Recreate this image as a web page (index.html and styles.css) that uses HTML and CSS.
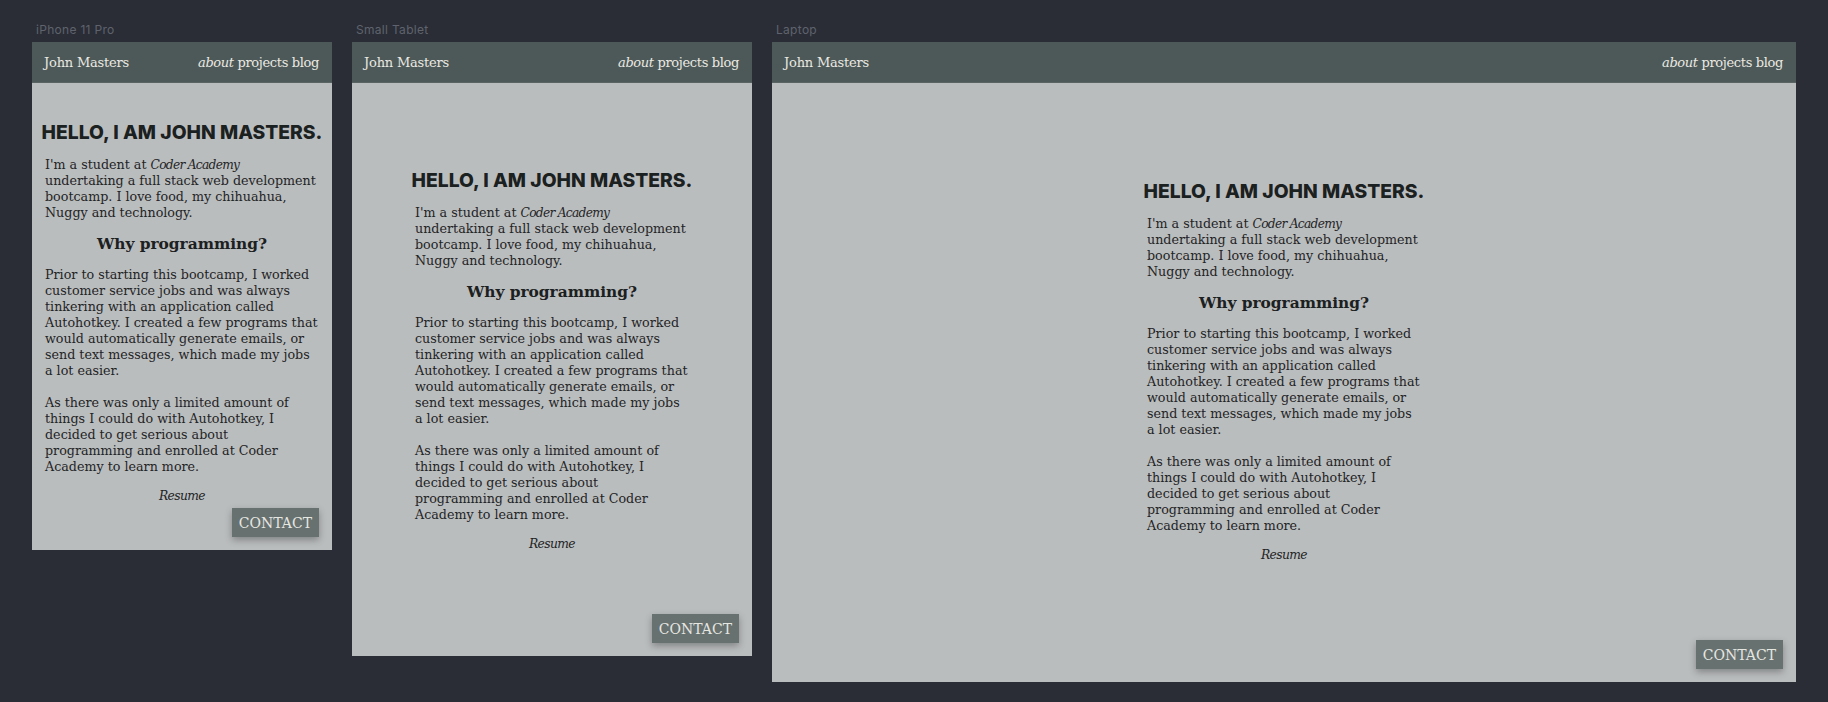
FILE: index.html
```html
<!DOCTYPE html>
<html lang="en">
<head>
<meta charset="utf-8">
<title>John Masters – responsive previews</title>
<link rel="stylesheet" href="styles.css">
</head>
<body>
<div class="board">

  <section class="device device-phone">
    <div class="label">iPhone 11 Pro</div>
    <div class="frame">
      <header class="topbar"><span class="brand">John Masters</span><nav class="nav"><em>about</em> projects blog</nav></header>
      <main class="main">
        <div class="content">
          <h1 class="hello">HELLO, I AM JOHN MASTERS.</h1>
          <p class="copy">I'm a student at <em class="school">Coder Academy</em><br>undertaking a full stack web development<br>bootcamp. I love food, my chihuahua,<br>Nuggy and technology.</p>
          <h2 class="why">Why programming?</h2>
          <p class="copy copy-spaced">Prior to starting this bootcamp, I worked<br>customer service jobs and was always<br>tinkering with an application called<br>Autohotkey. I created a few programs that<br>would automatically generate emails, or<br>send text messages, which made my jobs<br>a lot easier.</p>
          <p class="copy">As there was only a limited amount of<br>things I could do with Autohotkey, I<br>decided to get serious about<br>programming and enrolled at Coder<br>Academy to learn more.</p>
          <div class="resume">Resume</div>
        </div>
      </main>
      <button class="contact">CONTACT</button>
    </div>
  </section>

  <section class="device device-tablet">
    <div class="label">Small Tablet</div>
    <div class="frame">
      <header class="topbar"><span class="brand">John Masters</span><nav class="nav"><em>about</em> projects blog</nav></header>
      <main class="main">
        <div class="content">
          <h1 class="hello">HELLO, I AM JOHN MASTERS.</h1>
          <p class="copy">I'm a student at <em class="school">Coder Academy</em><br>undertaking a full stack web development<br>bootcamp. I love food, my chihuahua,<br>Nuggy and technology.</p>
          <h2 class="why">Why programming?</h2>
          <p class="copy copy-spaced">Prior to starting this bootcamp, I worked<br>customer service jobs and was always<br>tinkering with an application called<br>Autohotkey. I created a few programs that<br>would automatically generate emails, or<br>send text messages, which made my jobs<br>a lot easier.</p>
          <p class="copy">As there was only a limited amount of<br>things I could do with Autohotkey, I<br>decided to get serious about<br>programming and enrolled at Coder<br>Academy to learn more.</p>
          <div class="resume">Resume</div>
        </div>
      </main>
      <button class="contact">CONTACT</button>
    </div>
  </section>

  <section class="device device-laptop">
    <div class="label">Laptop</div>
    <div class="frame">
      <header class="topbar"><span class="brand">John Masters</span><nav class="nav"><em>about</em> projects blog</nav></header>
      <main class="main">
        <div class="content">
          <h1 class="hello">HELLO, I AM JOHN MASTERS.</h1>
          <p class="copy">I'm a student at <em class="school">Coder Academy</em><br>undertaking a full stack web development<br>bootcamp. I love food, my chihuahua,<br>Nuggy and technology.</p>
          <h2 class="why">Why programming?</h2>
          <p class="copy copy-spaced">Prior to starting this bootcamp, I worked<br>customer service jobs and was always<br>tinkering with an application called<br>Autohotkey. I created a few programs that<br>would automatically generate emails, or<br>send text messages, which made my jobs<br>a lot easier.</p>
          <p class="copy">As there was only a limited amount of<br>things I could do with Autohotkey, I<br>decided to get serious about<br>programming and enrolled at Coder<br>Academy to learn more.</p>
          <div class="resume">Resume</div>
        </div>
      </main>
      <button class="contact">CONTACT</button>
    </div>
  </section>

</div>
</body>
</html>
```

FILE: styles.css
```css
html, body {
  margin: 0;
  padding: 0;
}

body {
  background: #2a2d36;
  width: 1828px;
  height: 702px;
  overflow: hidden;
}

.board {
  display: flex;
  align-items: flex-start;
  gap: 20px;
  padding: 23px 0 0 32px;
}

.device {
  display: flex;
  flex-direction: column;
  gap: 5px;
}

.label {
  font-family: Inter, "Noto Sans", sans-serif;
  font-size: 12px;
  line-height: 14px;
  letter-spacing: 0.3px;
  color: #5f636d;
  padding-left: 4px;
}

.frame {
  display: flex;
  flex-direction: column;
  background: #babdbe;
}

.device-phone .frame { width: 300px; height: 508px; }
.device-tablet .frame { width: 400px; height: 614px; }
.device-laptop .frame { width: 1024px; height: 640px; }

.topbar {
  height: 40px;
  flex-shrink: 0;
  background: #4d5958;
  border-bottom: 1px solid #5a6463;
  display: flex;
  align-items: center;
  justify-content: space-between;
  padding: 0 13px 0 12px;
  color: #ebe9e3;
  font-family: "DejaVu Serif", serif;
  font-size: 13px;
}

.brand {
  letter-spacing: -0.2px;
}

.nav {
  letter-spacing: -0.35px;
}

.nav em { font-style: italic; }

.device-phone .main { padding-top: 37px; }
.device-tablet .main { padding-top: 85px; }
.device-laptop .main { padding-top: 96px; }

.content {
  width: 274px;
  margin: 0 auto;
  color: #1f2425;
}

.hello {
  margin: 0 -14px 13px;
  text-align: center;
  white-space: nowrap;
  font-family: Inter, "Noto Sans", sans-serif;
  font-weight: 800;
  font-size: 19.3px;
  line-height: 24px;
  letter-spacing: 0;
  color: #1b2020;
}

.copy {
  margin: 0 0 13px;
  white-space: nowrap;
  font-family: "DejaVu Serif", serif;
  font-size: 12.7px;
  line-height: 16px;
}

.copy-spaced {
  margin-bottom: 16px;
}

.school {
  font-size: 12.2px;
  letter-spacing: -0.7px;
}

.why {
  margin: 0 0 13px;
  text-align: center;
  font-family: "DejaVu Serif", serif;
  font-weight: 700;
  font-size: 15.4px;
  line-height: 20px;
  color: #1b2020;
}

.resume {
  text-align: center;
  font-family: "DejaVu Serif", serif;
  font-style: italic;
  font-size: 12.3px;
  letter-spacing: -0.6px;
  line-height: 16px;
}

.contact {
  margin: auto 13px 13px auto;
  height: 29px;
  padding: 0 7px;
  border: none;
  background: #667170;
  color: #e6e6e1;
  font-family: "DejaVu Serif", serif;
  font-size: 14px;
  box-shadow: 0 3px 7px rgba(0, 0, 0, 0.3);
}
```
